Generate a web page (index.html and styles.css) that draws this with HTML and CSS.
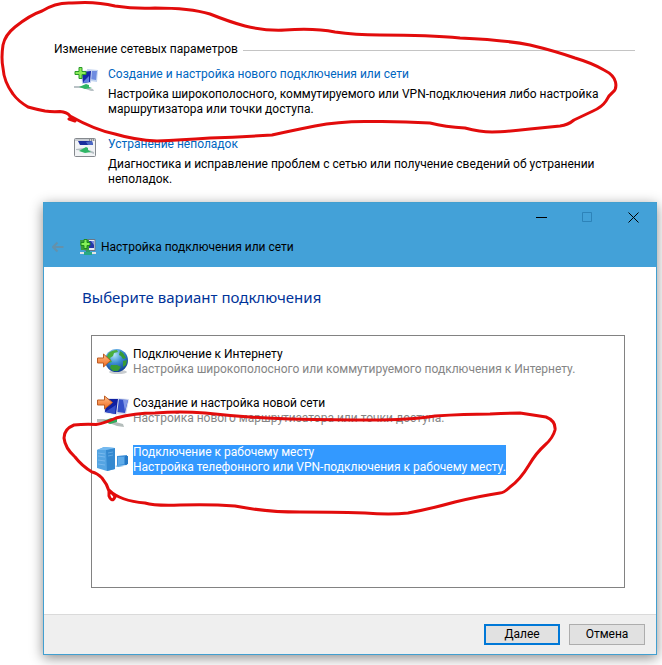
FILE: index.html
```html
<!DOCTYPE html>
<html lang="ru">
<head>
<meta charset="utf-8">
<title>Настройка подключения или сети</title>
<link rel="stylesheet" href="styles.css">
</head>
<body>
<main class="page">
  <section class="tasks">
    <h2 class="tasks-title">Изменение сетевых параметров</h2>
    <article class="task">
      <svg class="task-icon" viewBox="0 0 24 24" aria-hidden="true">
        <path d="M13 2l11 1-1 12-7-1z" fill="#c3d4f0"/>
        <path d="M16 4l7 0-1 9-6-1z" fill="#6f8ce0"/>
        <path d="M7 4l11-1-1 13-9 1z" fill="#c9d6f2"/>
        <path d="M8 5l9-1-1 11-7 1z" fill="#1527a8"/>
        <path d="M10 14l5-5v6l-6 1z" fill="#5f7fe0"/>
        <path d="M0 19l9 0 10 3 1 2-3 0-8-3-9 0z" fill="#b9c2c6"/>
        <path d="M5 20l7-3 3 1v2l3 1-7 1z" fill="#2fb565"/>
        <path d="M5 .5h3v4h4v3H8v4H5v-4H1v-3h4z" fill="#8cea58" stroke="#28992b"/>
      </svg>
      <div>
        <a class="task-link" href="#new-connection">Создание и настройка нового подключения или сети</a>
        <p class="task-text">Настройка широкополосного, коммутируемого или VPN-подключения либо настройка маршрутизатора или точки доступа.</p>
      </div>
    </article>
    <article class="task">
      <svg class="task-icon" viewBox="0 0 24 24" aria-hidden="true">
        <rect x=".5" y="1.500" width="21" height="18" rx="1" fill="#f1f3f5" stroke="#85898e"/>
        <path d="M1 3h20" stroke="#c9cdd2" stroke-width="2"/>
        <path d="M15 3h1m1 0h1m1 0h1" stroke="#555"/>
        <path d="M4 4l14 0 1 4-13 0z" fill="#1a2e9c"/>
        <path d="M12 5l6-1 1 4-5 0z" fill="#4c68c4"/>
        <path d="M2 12l8-1 10 4v2l-8-3-10-1z" fill="#b5bec3"/>
        <path d="M5 14l7-4 2 1v2l3 2-6 1z" fill="#2fb565"/>
      </svg>
      <div>
        <a class="task-link" href="#troubleshoot">Устранение неполадок</a>
        <p class="task-text">Диагностика и исправление проблем с сетью или получение сведений об устранении неполадок.</p>
      </div>
    </article>
  </section>

  <section class="window" aria-labelledby="window-title">
    <header class="titlebar">
      <div class="controls">
        <button class="control" type="button" aria-label="Свернуть"><svg viewBox="0 0 11 11"><path d="M0 5.500h11"/></svg></button>
        <button class="control" type="button" aria-label="Развернуть" disabled><svg viewBox="0 0 11 11"><path d="M.5.5h9v9H.5z"/></svg></button>
        <button class="control" type="button" aria-label="Закрыть"><svg viewBox="0 0 11 11"><path d="M.5.5l10 10M10.500.5l-10 10"/></svg></button>
      </div>
      <div class="caption">
        <button class="back" type="button" aria-label="Назад" disabled><svg viewBox="0 0 12 12"><path d="M11.500 6H1M5.500 1.500L1 6l4.500 4.500"/></svg></button>
        <svg class="caption-icon" viewBox="0 0 16 16" aria-hidden="true">
          <path d="M5 .5h10v11H5z" fill="#e6ebf4" stroke="#6c7686"/>
          <path d="M7 2h7v7H7z" fill="#2436a8"/>
          <path d="M11 2h3v4z" fill="#7d8fe0"/>
          <path d="M0 1h9v10H1z" fill="#3c9a3c"/>
          <path d="M6 11h4v3H6z" fill="#2c9a6a"/>
          <path d="M0 13h16v2H0z" fill="#e2e5e6"/>
          <path d="M4 13h8v3H4z" fill="#26a884"/>
          <path d="M4 .5h3v3h3v3H7v3H4v-3H1v-3h3z" fill="#86f058" stroke="#1c8c1c"/>
        </svg>
        <span id="window-title">Настройка подключения или сети</span>
      </div>
    </header>
    <div class="content">
      <h1 class="heading">Выберите вариант подключения</h1>
      <ul class="options">
        <li><button class="option" type="button">
          <svg class="option-icon" viewBox="0 0 32 34" aria-hidden="true">
            <defs><radialGradient id="globe" cx=".4" cy=".25" r=".8"><stop offset="0" stop-color="#b5e6fa"/><stop offset=".45" stop-color="#3e8fd5"/><stop offset="1" stop-color="#0c388d"/></radialGradient>
            <linearGradient id="arrow" x2="0" y2="1"><stop offset="0" stop-color="#ffc08a"/><stop offset="1" stop-color="#f1681d"/></linearGradient></defs>
            <ellipse cx="21" cy="26" rx="9" ry="2" fill="#c9cdd0"/>
            <circle cx="19.500" cy="14.500" r="11.500" fill="url(#globe)"/>
            <path d="M11 8c2-3 6-4 9-4l1 2-4 1-1 3-3 2 2 4-3 1-3-4z" fill="#49ad3e"/>
            <path d="M23 5l3 2 3 5-3 1-2-3-2-1zM14 19l6 0 4 2-3 4-5 0-3-3zM26 15l4-1-1 5-3 2z" fill="#389b35"/>
            <path d="M.5 12h6V8l7 6.500-7 6.500v-4h-6z" fill="url(#arrow)" stroke="#bd5d25"/>
          </svg>
          <span class="option-body"><span class="option-title">Подключение к Интернету</span><span class="option-text">Настройка широкополосного или коммутируемого подключения к Интернету.</span></span>
        </button></li>
        <li><button class="option" type="button">
          <svg class="option-icon" viewBox="0 0 32 34" aria-hidden="true">
            <path d="M18 3l14 1-3 16-10-1z" fill="#d5dcee"/>
            <path d="M20 4l11 1-3 13-8-1z" fill="#3450c8"/>
            <path d="M26 5l5 0-3 11z" fill="#8298e6"/>
            <path d="M8 3l14 0-2 17-13-2z" fill="#e1e6f4"/>
            <path d="M9 4l12 0-2 15-11-2z" fill="#1020a1"/>
            <path d="M8 17l11-7-1 9z" fill="#3450c8"/>
            <path d="M0 24h7l8 2 11 3 1 3-7-1-8-3-12-1z" fill="#b4bdbb"/>
            <path d="M6 26l8-3 6 1v3l-7 2z" fill="#31ac5b"/>
            <path d="M.5 5h7V1l8 6.500-8 6.500v-4h-7z" fill="url(#arrow)" stroke="#bd5d25"/>
          </svg>
          <span class="option-body"><span class="option-title">Создание и настройка новой сети</span><span class="option-text">Настройка нового маршрутизатора или точки доступа.</span></span>
        </button></li>
        <li><button class="option selected" type="button">
          <svg class="option-icon" viewBox="0 0 32 34" aria-hidden="true">
            <path d="M0 6l7-3 11 1v21l-8 2-10-3z" fill="#55a5e3"/>
            <path d="M9 6l9-2v21l-8 2z" fill="#3489d0"/>
            <path d="M0 6l7-3 11 1-9 2z" fill="#75baf0"/>
            <path d="M1 9l7 1M1 12l7 1M1 16l7 1M1 20l7 1" stroke="#78b9ee"/>
            <path d="M11 9l5-1M11 12l5-1" stroke="#5ea7e3"/>
            <path d="M20 12l10-1v10l-10 1z" fill="#3e91da"/>
            <path d="M21 13l6 0v7l-6 1z" fill="#5eabe9"/>
            <path d="M28 12l3 0v8l-3 1z" fill="#2678c4"/>
            <path d="M18 22l5-1 4 1-6 1z" fill="#5ca8e2"/>
          </svg>
          <span class="option-body"><span class="option-title">Подключение к рабочему месту</span><span class="option-text">Настройка телефонного или VPN-подключения к рабочему месту.</span></span>
        </button></li>
      </ul>
    </div>
    <footer class="footer">
      <button class="button primary" type="button">Далее</button>
      <button class="button" type="button">Отмена</button>
    </footer>
  </section>

  <svg class="marker" width="662" height="530" viewBox="0 0 662 530" aria-hidden="true">
    <path d="M69 119L75 121L70 116Q67 112 60 111.500Q52 112 45 111Q35 109 28 107Q18 101 13 94Q4 82 3 68Q1 58 3 45Q5 35 15 27Q30 15 42 11Q56 2 72 3Q95 1 115 6Q135 9 155 8Q190 8 210 14Q230 22 245 26Q265 31 285 30Q315 28 335 32Q355 35 380 35Q430 35 460 38Q505 40 530 45Q555 51 575 58Q592 63 604 70Q614 75 615.500 82Q617 89 613 92Q608 96 606 101Q602 107 593 111L574 120Q568 125 560 126L530 129Q505 132 492 132Q480 132 465 128Q445 127 430 123Q400 121 370 121.500Q340 121 315 126Q290 131 272 135Q240 137 210 138Q180 140 157 141Q135 140 115 134Q95 130 70 116"/>
    <path d="M109 490L109 496Q112 503 115 497Q114 494 109 491Q107 484 102 478Q97 473 92 472Q82 466 75 457Q65 448 64 438Q64 429 74 425Q84 424 96 424.500Q105 423 116 418Q135 413 155 413Q180 411 205 413Q250 418 290 419Q340 420 370 420Q410 420 435 416Q465 414 490 414Q510 413 520 413Q533 415 546 417Q556 421 555 430Q553 438 545 445Q536 453 529 465Q520 480 510 487Q504 493 500 493Q480 496 455 502Q430 509 408 513Q390 515 365 513Q330 512 300 512Q265 512 235 506Q210 504 180 505Q155 506 145 503Q120 501 109 490"/>
  </svg>
</main>
</body>
</html>
```
FILE: styles.css
```css
* {
  box-sizing: border-box;
}

body {
  margin: 0;
  background: #fff;
  color: #000;
  font: 12px/15px Roboto, "Open Sans", sans-serif;
}

button {
  padding: 0;
  border: 0;
  background: none;
  color: inherit;
  font: inherit;
}

h1, h2, p, ul {
  margin: 0;
  padding: 0;
  font-weight: 400;
}

.page {
  position: relative;
  min-height: 100vh;
  padding: 42px 5px 10px 43px;
  overflow: hidden;
}

.tasks {
  padding: 0 22px 0 11px;
}

.tasks-title {
  display: flex;
  align-items: center;
  gap: 5px;
  margin-bottom: 10px;
  font-size: 12px;
}

.tasks-title::after {
  content: "";
  flex: 1;
  height: 1px;
  margin-top: 1px;
  background: #c4c4c4;
}

.task {
  display: flex;
  gap: 10px;
  padding-left: 20px;
  margin-bottom: 20px;
}

.task-icon {
  flex: none;
  width: 24px;
  height: 24px;
}

.task-link {
  display: block;
  margin-bottom: 5px;
  color: #0066bf;
  text-decoration: none;
}

.task-text {
  max-width: 500px;
}

.window {
  margin-top: -5px;
  border: 1px solid #429fd0;
  background: #fff;
  box-shadow: 0 3px 12px rgba(0, 0, 0, 0.45);
}

.titlebar {
  height: 64px;
  background: #43a1d8;
}

.controls {
  display: flex;
  justify-content: flex-end;
}

.control {
  display: grid;
  place-items: center;
  width: 46px;
  height: 28px;
}

.control svg {
  width: 11px;
  height: 11px;
  fill: none;
  stroke: #000;
}

.control:disabled svg {
  stroke: #2d83b9;
}

.caption {
  display: flex;
  align-items: center;
  height: 32px;
  padding-left: 8px;
}

.back {
  display: grid;
  width: 12px;
  margin-right: 16px;
}

.back svg {
  width: 12px;
  height: 12px;
  fill: none;
  stroke: #6491ab;
  stroke-width: 2;
}

.caption-icon {
  width: 16px;
  height: 16px;
  margin-right: 5px;
}

.content {
  padding: 19px 31px 26px 38px;
}

.heading {
  color: #003399;
  font-family: "Noto Sans", sans-serif;
  font-size: 15px;
  line-height: 22px;
}

.options {
  min-height: 253px;
  margin: 27px 0 0 9px;
  padding: 10px 5px;
  border: 1px solid #828282;
  list-style: none;
}

.option {
  display: flex;
  gap: 4px;
  width: 100%;
  margin-bottom: 15px;
  text-align: left;
}

.option-icon {
  flex: none;
  width: 32px;
  height: 34px;
}

.option-body {
  align-self: flex-start;
  margin-top: 1px;
}

.option-title,
.option-text {
  display: block;
}

.option-text {
  color: #858585;
}

.selected .option-body {
  background: #3399ff;
}

.selected .option-title,
.selected .option-text {
  color: #fff;
}

.footer {
  display: flex;
  justify-content: flex-end;
  gap: 9px;
  padding: 9px 11px;
  border-top: 1px solid #dadada;
  background: #efefef;
}

.button {
  width: 76px;
  height: 21px;
  border: 1px solid #adadad;
  background: #e1e1e1;
}

.primary {
  border: 2px solid #0078d7;
}

.marker {
  position: absolute;
  top: 0;
  left: 0;
  fill: none;
  stroke: #e20c0c;
  stroke-width: 3;
  stroke-linejoin: round;
  stroke-linecap: round;
  pointer-events: none;
}
```
